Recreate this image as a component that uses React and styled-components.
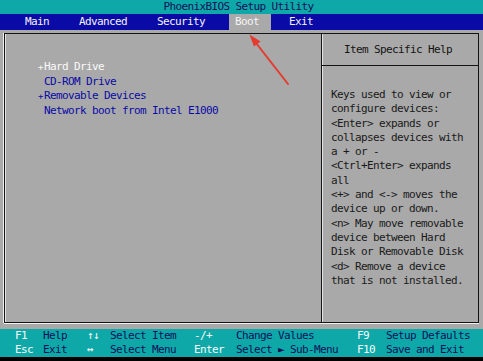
import React from "react"
import styled, { createGlobalStyle } from "styled-components"

const GlobalStyle = createGlobalStyle`
  html, body { margin: 0; padding: 0; background: #000; }
  body {
    font-family: "DejaVu Sans Mono", "Liberation Mono", monospace;
    font-size: 11px;
    letter-spacing: -0.62px;
  }
`

const TEAL = "#0ea8a8"
const BLUE = "#0a0aa6"
const GRAY = "#a9a9a9"
const NAVY = "#10105a"

const Screen = styled.div`
  position: relative;
  width: 483px;
  height: 361px;
  display: flex;
  flex-direction: column;
  background: #000;
  overflow: hidden;
`

const TitleBar = styled.div`
  height: 14px;
  line-height: 14px;
  background: ${TEAL};
  color: ${NAVY};
  text-align: center;
  padding-right: 6px;
`

const MenuBar = styled.div`
  height: 16px;
  background: ${BLUE};
  display: flex;
  gap: 12px;
  padding-left: 19px;
  align-items: stretch;
`

const Tab = styled.div`
  padding: 0 12px 0 6px;
  line-height: 16px;
  color: #f4f4f4;
  background: ${p => (p.$active ? GRAY : "transparent")};
`

const Body = styled.div`
  height: 299px;
  box-sizing: border-box;
  background: ${GRAY};
  padding: 3px 4px 6px 4px;
`

const Frame = styled.div`
  height: 100%;
  box-sizing: border-box;
  border: 1px solid #141414;
  box-shadow: -1px 0 0 #f0f0f0, 0 1px 0 #f0f0f0, inset 1px 0 0 #e4e4e4;
  display: grid;
  grid-template-columns: 1fr 157px;
`

const BootList = styled.div`
  padding: 26px 0 0 33px;
`

const BootRow = styled.div`
  display: flex;
  height: 14.5px;
  line-height: 14.5px;
  white-space: pre;
  color: ${p => (p.$selected ? "#fafafa" : BLUE)};
`

const Marker = styled.span`
  width: 6px;
  font-size: 9px;
  text-align: left;
`

const HelpPanel = styled.div`
  border-left: 1px solid #141414;
  box-shadow: inset 1px 0 0 #e4e4e4;
  display: flex;
  flex-direction: column;
`

const HelpHeader = styled.div`
  height: 31px;
  line-height: 31px;
  border-bottom: 1px solid #141414;
  text-align: center;
  color: #141414;
  padding-right: 4px;
`

const HelpText = styled.div`
  padding: 22px 0 0 9px;
  color: #1a1a1a;
  line-height: 14.3px;
  white-space: pre;
`

const Footer = styled.div`
  height: 28px;
  background: ${TEAL};
  display: grid;
  grid-template-columns: 28px 44px 23px 84px 42px 121px 29px 1fr;
  grid-auto-rows: 14px;
  padding-left: 15px;
  line-height: 14px;
  white-space: pre;
`

const Key = styled.span`
  color: #fafafa;
`

const Desc = styled.span`
  color: ${NAVY};
`

const Overlay = styled.svg`
  position: absolute;
  left: 0;
  top: 0;
  pointer-events: none;
`

const tabs = ["Main", "Advanced", "Security", "Boot", "Exit"]

const bootItems = [
  { marker: "+", label: "Hard Drive", selected: true },
  { marker: "", label: "CD-ROM Drive" },
  { marker: "+", label: "Removable Devices" },
  { marker: "", label: "Network boot from Intel E1000" },
]

const help = [
  "Keys used to view or",
  "configure devices:",
  "<Enter> expands or",
  "collapses devices with",
  "a + or -",
  "<Ctrl+Enter> expands",
  "all",
  "<+> and <-> moves the",
  "device up or down.",
  "<n> May move removable",
  "device between Hard",
  "Disk or Removable Disk",
  "<d> Remove a device",
  "that is not installed.",
]

const keys = [
  ["F1", "Help", "↑↓", "Select Item", "-/+", "Change Values", "F9", "Setup Defaults"],
  ["Esc", "Exit", "↔", "Select Menu", "Enter", "Select ► Sub-Menu", "F10", "Save and Exit"],
]

export default function App() {
  return (
    <Screen>
      <GlobalStyle />
      <TitleBar>PhoenixBIOS Setup Utility</TitleBar>
      <MenuBar>
        {tabs.map(t => (
          <Tab key={t} $active={t === "Boot"}>{t}</Tab>
        ))}
      </MenuBar>
      <Body>
        <Frame>
          <BootList>
            {bootItems.map(item => (
              <BootRow key={item.label} $selected={item.selected}>
                <Marker>{item.marker}</Marker>
                {item.label}
              </BootRow>
            ))}
          </BootList>
          <HelpPanel>
            <HelpHeader>Item Specific Help</HelpHeader>
            <HelpText>{help.join("\n")}</HelpText>
          </HelpPanel>
        </Frame>
      </Body>
      <Footer>
        {keys.map((row, r) =>
          row.map((cell, i) =>
            i % 2 === 0 ? <Key key={r + "-" + i}>{cell}</Key> : <Desc key={r + "-" + i}>{cell}</Desc>
          )
        )}
      </Footer>
      <Overlay width="483" height="361" viewBox="0 0 483 361">
        <line x1="288" y1="84" x2="256" y2="43" stroke="#e53a2e" strokeWidth="2" strokeLinecap="round" />
        <polygon points="249.5,34.5 260.5,41.5 254,46.5" fill="#e53a2e" />
      </Overlay>
    </Screen>
  )
}
